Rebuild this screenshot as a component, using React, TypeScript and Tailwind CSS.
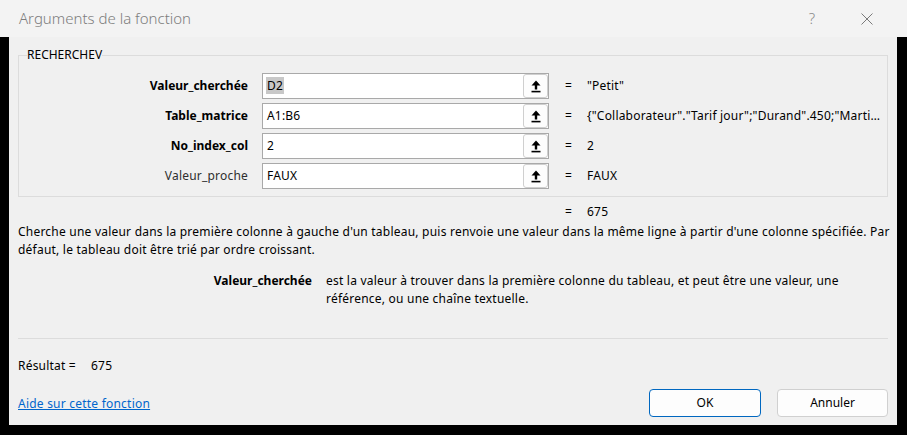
import React from "react";

const font = { fontFamily: '"Noto Sans", "Open Sans", sans-serif' };

function UpIcon() {
  return (
    <svg width="10" height="13" viewBox="0 0 10 13">
      <polygon points="5,0.5 9.5,5.5 0.5,5.5" fill="#000" />
      <rect x="3.8" y="5" width="2.4" height="4.5" fill="#000" />
      <rect x="0.5" y="10.8" width="9" height="1.6" fill="#000" />
    </svg>
  );
}

function Row({
  label,
  bold,
  value,
  result,
  selected,
}: {
  label: string;
  bold?: boolean;
  value: string;
  result: string;
  selected?: boolean;
}) {
  return (
    <div className="flex items-center h-[26px]">
      <div
        className={`w-[229px] text-right text-[12px] ${
          bold ? "font-bold text-black" : "text-[#2e2e2e] tracking-[0.2px]"
        }`}
      >
        {label}
      </div>
      <div className="ml-[14px] w-[287px] h-[26px] border border-[#a9a9a9] bg-white flex items-center justify-between">
        <span className="ml-[3px] text-[12px] text-black leading-[18px] tracking-[0.2px]">
          {selected ? (
            <span className="bg-[#c8c8c8] px-[1px]">{value}</span>
          ) : (
            <span className="px-[1px]">{value}</span>
          )}
        </span>
        <div className="w-[25px] h-[24px] border border-[#cfcfcf] rounded-[3px] bg-[#fdfdfd] flex items-center justify-center">
          <UpIcon />
        </div>
      </div>
      <div className="ml-[16px] w-[22px] text-[12px] text-black">=</div>
      <div className="whitespace-nowrap text-[12px] text-black tracking-[0.2px]">{result}</div>
    </div>
  );
}

export default function App() {
  return (
    <div
      className="w-[907px] h-[435px] bg-black overflow-hidden relative"
      style={font}
    >
      {/* title bar */}
      <div className="h-[37px] bg-[#f3f3f3] flex items-center">
        <div className="ml-[19px] text-[15px] text-[#7d7d7d] font-light">
          Arguments de la fonction
        </div>
        <div className="ml-auto flex items-center">
          <span className="text-[15px] text-[#8a8a8a] font-light mr-[46px]">?</span>
          <svg width="12" height="12" viewBox="0 0 12 12" className="mr-[34px]">
            <path d="M0.5 0.5 L11.5 11.5 M11.5 0.5 L0.5 11.5" stroke="#7a7a7a" strokeWidth="1" />
          </svg>
        </div>
      </div>

      {/* content */}
      <div className="flow-root ml-[9px] w-[888px] h-[388px] bg-[#f0f0f0] px-[9px] text-black">
        <fieldset className="mt-[10px] border border-[#dcdcdc] pb-[7px]">
          <legend className="ml-[8px] text-[12px] leading-[16px] text-black">
            RECHERCHEV
          </legend>
          <div className="mt-[10px] flex flex-col gap-[4px]">
            <Row label="Valeur_cherchée" bold value="D2" result={'"Petit"'} selected />
            <Row
              label="Table_matrice"
              bold
              value="A1:B6"
              result={'{"Collaborateur"."Tarif jour";"Durand".450;"Marti…'}
            />
            <Row label="No_index_col" bold value="2" result="2" />
            <Row label="Valeur_proche" value="FAUX" result="FAUX" />
          </div>
        </fieldset>

        <div className="mt-[6px] h-[18px] flex items-center text-[12px]">
          <div className="ml-[547px] w-[22px]">=</div>
          <div className="tracking-[0.2px]">675</div>
        </div>

        <div className="mt-[2px] text-[12px] leading-[18px] tracking-[0.22px] whitespace-nowrap">
          Cherche une valeur dans la première colonne à gauche d'un tableau, puis renvoie une valeur dans la même ligne à partir d'une colonne spécifiée. Par
          <br />
          défaut, le tableau doit être trié par ordre croissant.
        </div>

        <div className="mt-[13px] flex text-[12px] leading-[18px]">
          <div className="w-[294px] text-right font-bold">Valeur_cherchée</div>
          <div className="ml-[14px] tracking-[0.22px] whitespace-nowrap">
            est la valeur à trouver dans la première colonne du tableau, et peut être une valeur, une
            <br />
            référence, ou une chaîne textuelle.
          </div>
        </div>

        <div className="mt-[30px] h-px bg-[#dcdcdc]" />

        <div className="mt-[18px] h-[18px] flex items-center text-[12px] tracking-[0.2px]">
          <span className="w-[73px]">Résultat =</span>
          <span>675</span>
        </div>

        <div className="mt-[14px] h-[28px] flex items-center">
          <a className="mt-[2px] text-[12px] text-[#0066cc] underline cursor-pointer tracking-[0.22px]">
            Aide sur cette fonction
          </a>
          <div className="ml-auto flex gap-[16px]">
            <button className="w-[112px] h-[28px] border border-[#0067c0] rounded-[4px] bg-[#fdfdfd] text-[12px] text-black">
              OK
            </button>
            <button className="w-[111px] h-[28px] border border-[#d0d0d0] rounded-[4px] bg-[#fdfdfd] text-[12px] text-black">
              Annuler
            </button>
          </div>
        </div>
      </div>
    </div>
  );
}
